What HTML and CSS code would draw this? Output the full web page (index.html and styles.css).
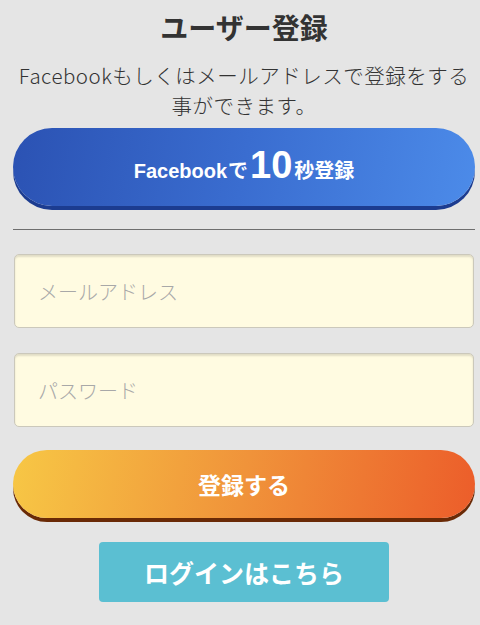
FILE: index.html
```html
<!DOCTYPE html>
<html lang="ja">

<head>
    <meta charset="UTF-8">
    <meta name="viewport" content="width=device-width, initial-scale=1.0">
    <title>ユーザー登録</title>
    <link rel="stylesheet" href="styles.css">
</head>

<body>
    <div class="container">
        <h2 class="title">ユーザー登録</h2>
        <p class="lead">Facebookもしくはメールアドレスで登録をする事ができます。</p>

        <button class="fb-button" id="facebookButton">
            <span class="fb-name">Facebook</span>で<span class="fb-num">10</span>秒登録
        </button>

        <hr class="divider">

        <form id="registerForm" class="register-form">
            <input type="email" class="field" id="email" name="email" placeholder="メールアドレス">
            <input type="password" class="field" id="password" name="password" placeholder="パスワード">
            <button type="submit" class="submit-button">登録する</button>
        </form>

        <a href="#" class="login-button">ログインはこちら</a>
    </div>
</body>

</html>
```

FILE: styles.css
```css
body {
    font-family: "Noto Sans CJK JP", sans-serif;
    margin: 0;
    padding: 0;
    background-color: #e5e5e5;
    color: #333;
}

.container {
    display: flex;
    flex-direction: column;
    padding: 10px 5px 0 13px;
}

.title {
    margin: 0;
    font-size: 28px;
    line-height: 34px;
    font-weight: bold;
    text-align: center;
    color: #333;
}

.lead {
    margin: 16px 0 0;
    font-size: 20.5px;
    font-weight: 300;
    line-height: 30px;
    text-align: center;
    letter-spacing: 0.5px;
    color: #333;
}

.fb-button {
    margin-top: 8px;
    height: 78px;
    border: none;
    border-radius: 39px;
    background: linear-gradient(100deg, #2b52b3 0%, #3a6dd0 50%, #4c8be9 100%);
    box-shadow: 0 4px 0 #1c3c90;
    color: white;
    font-family: "Liberation Sans", "Noto Sans CJK JP", sans-serif;
    font-size: 20px;
    font-weight: bold;
    display: flex;
    align-items: baseline;
    justify-content: center;
    padding-top: 18px;
    line-height: 1;
}

.fb-name {
    margin-right: 1px;
}

.fb-num {
    font-size: 38px;
    margin: 0 2px;
}

.divider {
    margin: 23px 0 0;
    border: none;
    border-top: 1px solid #6e6e6e;
}

.register-form {
    display: flex;
    flex-direction: column;
    gap: 25px;
    margin-top: 24px;
}

.field {
    height: 74px;
    margin: 0 1px;
    box-sizing: border-box;
    padding: 0 23px;
    border: 1px solid #cbc8bb;
    border-radius: 5px;
    background-color: #fffbe1;
    box-shadow: inset 0 2px 2px rgba(0, 0, 0, 0.12);
    font-family: "Noto Sans CJK JP", sans-serif;
    font-size: 20px;
    font-weight: 300;
    color: #333;
}

.field::placeholder {
    color: #a8a8a8;
}

.submit-button {
    margin-top: -2px;
    height: 68px;
    border: none;
    border-radius: 34px;
    background: linear-gradient(100deg, #f7c745 0%, #f0933a 50%, #ec5d2a 100%);
    box-shadow: 0 4px 0 #6a2a06;
    color: white;
    font-family: "Noto Sans CJK JP", sans-serif;
    font-size: 23px;
    font-weight: bold;
}

.login-button {
    align-self: center;
    margin-top: 24px;
    width: 290px;
    height: 60px;
    line-height: 60px;
    border-radius: 4px;
    background-color: #5bbfd2;
    color: white;
    font-size: 25px;
    font-weight: bold;
    text-align: center;
    text-decoration: none;
}
```
